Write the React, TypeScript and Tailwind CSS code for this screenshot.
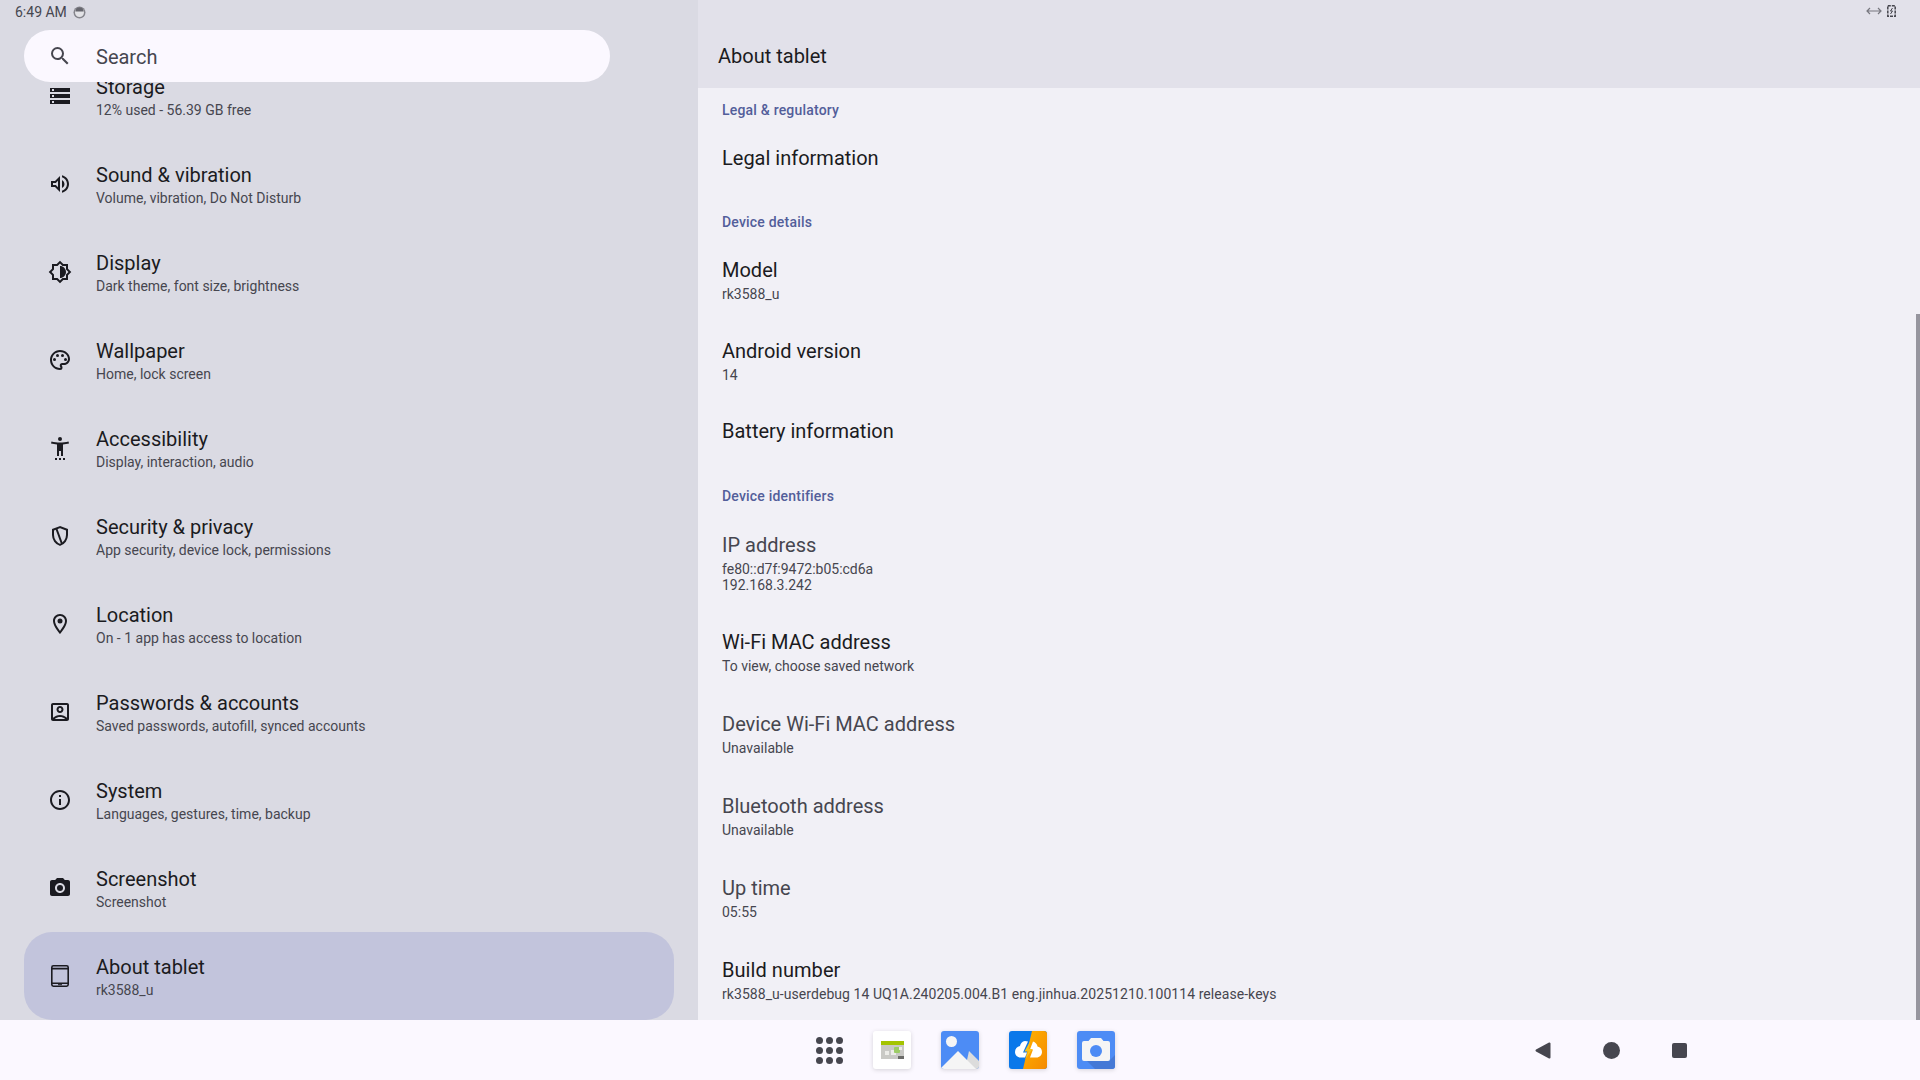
import { MdSearch, MdStorage, MdOutlineVolumeUp, MdOutlineBrightnessMedium, MdOutlinePalette, MdOutlineLocationOn, MdOutlineAccountBox, MdInfoOutline } from "react-icons/md";
import type { ReactNode } from "react";

const FONT = "font-['Roboto',sans-serif]";

function AccessibilityIcon() {
  return (
    <svg viewBox="0 0 24 24" className="h-6 w-6" fill="currentColor">
      <path d="M20.5 5.5c-2.61.7-5.67 1-8.5 1s-5.89-.3-8.5-1L3 7.5c1.86.5 4 .83 6 1V20h2v-5h2v5h2V8.5c2-.17 4.14-.5 6-1l-.5-2z" />
      <circle cx="12" cy="3" r="2" />
      <rect x="7" y="22" width="2" height="2" />
      <rect x="11" y="22" width="2" height="2" />
      <rect x="15" y="22" width="2" height="2" />
    </svg>
  );
}

function ShieldIcon() {
  return (
    <svg viewBox="0 0 24 24" className="h-6 w-6" fill="none" stroke="currentColor" strokeWidth="2">
      <path d="M12 3.1 5 5.7v5.4c0 4.4 2.9 8.5 7 9.8 4.1-1.3 7-5.4 7-9.8V5.7l-7-2.6z" />
      <path d="M8.5 5 14 20" />
    </svg>
  );
}

function CameraIcon() {
  return (
    <svg viewBox="0 0 24 24" className="h-6 w-6" fill="currentColor">
      <path d="M9 2 7.17 4H4c-1.1 0-2 .9-2 2v12c0 1.1.9 2 2 2h16c1.1 0 2-.9 2-2V6c0-1.1-.9-2-2-2h-3.17L15 2H9zm3 15c-2.76 0-5-2.24-5-5s2.24-5 5-5 5 2.24 5 5-2.24 5-5 5z" />
      <circle cx="12" cy="12" r="3" />
    </svg>
  );
}

function TabletIcon() {
  return (
    <svg viewBox="0 0 24 24" className="h-6 w-6" fill="none" stroke="currentColor" strokeWidth="1.6">
      <rect x="3.8" y="1.8" width="16.4" height="20.4" rx="1.6" />
      <path d="M3.8 4.6h16.4M3.8 19.2h16.4" />
      <path d="M10 20.7h4" strokeWidth="1" />
    </svg>
  );
}

const menuItems: { title: string; sub: string; icon: ReactNode; active?: boolean }[] = [
  { title: "Sound & vibration", sub: "Volume, vibration, Do Not Disturb", icon: <MdOutlineVolumeUp size={24} /> },
  { title: "Display", sub: "Dark theme, font size, brightness", icon: <MdOutlineBrightnessMedium size={24} /> },
  { title: "Wallpaper", sub: "Home, lock screen", icon: <MdOutlinePalette size={24} /> },
  { title: "Accessibility", sub: "Display, interaction, audio", icon: <AccessibilityIcon /> },
  { title: "Security & privacy", sub: "App security, device lock, permissions", icon: <ShieldIcon /> },
  { title: "Location", sub: "On - 1 app has access to location", icon: <MdOutlineLocationOn size={24} /> },
  { title: "Passwords & accounts", sub: "Saved passwords, autofill, synced accounts", icon: <MdOutlineAccountBox size={24} /> },
  { title: "System", sub: "Languages, gestures, time, backup", icon: <MdInfoOutline size={24} /> },
  { title: "Screenshot", sub: "Screenshot", icon: <CameraIcon /> },
  { title: "About tablet", sub: "rk3588_u", icon: <TabletIcon />, active: true },
];

function MenuRow({ title, sub, icon, active }: { title: string; sub: string; icon: ReactNode; active?: boolean }) {
  return (
    <div className={`flex h-[88px] items-center gap-6 pl-6 text-[#1b1b21] ${active ? "rounded-[28px] bg-[#c2c4dc]" : ""}`}>
      <div className="flex h-6 w-6 items-center justify-center">{icon}</div>
      <div className="pt-[2px]">
        <div className="text-[20px] leading-[26px]">{title}</div>
        <div className="text-[14px] leading-5 text-[#46464f]">{sub}</div>
      </div>
    </div>
  );
}

function SectionHeader({ label, className }: { label: string; className: string }) {
  return <div className={`pl-6 text-[14px] leading-5 font-medium tracking-[0.2px] text-[#535e9a] ${className}`}>{label}</div>;
}

function InfoRow({ title, sub, dim, className }: { title: string; sub?: string[]; dim?: boolean; className: string }) {
  return (
    <div className={`pl-6 ${className}`}>
      <div className={`text-[20px] leading-[27px] ${dim ? "text-[#46464f]" : "text-[#1b1b21]"}`}>{title}</div>
      {sub && (
        <div className="pt-[2px] text-[14px] leading-4 text-[#46464f]">
          {sub.map((line) => (
            <div key={line}>{line}</div>
          ))}
        </div>
      )}
    </div>
  );
}

function CalendarTile() {
  return (
    <svg viewBox="0 0 38 38" className="h-[38px] w-[38px]">
      <rect width="38" height="38" rx="3" fill="#ffffff" />
      <rect x="8" y="10" width="23" height="18" fill="#c9c9c5" />
      <rect x="8" y="10" width="23" height="4" fill="#a4c400" />
      <rect x="12" y="20" width="4" height="4" fill="#ecece8" />
      <rect x="18" y="19" width="5" height="5" fill="#ecece8" />
      <rect x="21" y="16" width="6" height="6" rx="1" fill="#9ccc65" />
      <rect x="26" y="16" width="3" height="3" fill="#ecece8" />
      <rect x="25" y="25" width="6" height="3" fill="#6b6b68" />
    </svg>
  );
}

function GalleryTile() {
  return (
    <svg viewBox="0 0 38 38" className="h-[38px] w-[38px]">
      <defs>
        <clipPath id="gallery">
          <rect width="38" height="38" rx="3" />
        </clipPath>
      </defs>
      <g clipPath="url(#gallery)">
        <rect width="38" height="38" fill="#4d8cf5" />
        <circle cx="10.5" cy="10.5" r="5.5" fill="#f5f5f5" />
        <path d="M28 20 38 30v8H24z" fill="#dcdcdc" />
        <path d="M17 20 0 37v1h35z" fill="#f5f5f5" />
      </g>
    </svg>
  );
}

function BoltTile() {
  return (
    <svg viewBox="0 0 38 38" className="h-[38px] w-[38px]">
      <defs>
        <clipPath id="tile">
          <rect width="38" height="38" rx="3" />
        </clipPath>
        <linearGradient id="orange" x1="0" y1="0" x2="1" y2="1">
          <stop offset="0" stopColor="#ffb300" />
          <stop offset="1" stopColor="#f58a00" />
        </linearGradient>
      </defs>
      <g clipPath="url(#tile)">
        <rect width="38" height="38" fill="#0a78ea" />
        <path d="M23 0h15v38H14z" fill="url(#orange)" />
        <path d="M16 10c-3 .3-4.500 2.500-5 5C8 15.500 6 18 6 21s2.500 5.500 5.500 5.500H16l2-5h-4l5-11z" fill="#ffffff" />
        <path d="M24 10.500c2.500 1 4 2.500 4.500 5 2.800.5 4.500 2.500 4.500 5.500s-2.500 5.500-5.500 5.500H21l3-8h-3z" fill="#ffffff" />
        <path d="M21.500 9.500 15.500 20.500h4L16 28.500l7.500-10.500h-4z" fill="#f9c21a" />
      </g>
    </svg>
  );
}

function CameraTile() {
  return (
    <svg viewBox="0 0 38 38" className="h-[38px] w-[38px]">
      <rect width="38" height="38" rx="3" fill="#4d8cf5" />
      <path d="M10 30h22l6-6v11a3 3 0 0 1-3 3H18z" fill="#4579d6" />
      <path d="M14 7h10l2.500 3H31a2 2 0 0 1 2 2v16a2 2 0 0 1-2 2H7a2 2 0 0 1-2-2V12a2 2 0 0 1 2-2h4.500z" fill="#f5f5f5" />
      <circle cx="19" cy="20" r="6" fill="#4d8cf5" />
    </svg>
  );
}

export default function App() {
  return (
    <div className={`relative flex h-[1080px] w-[1920px] flex-col overflow-hidden bg-[#fbf8ff] ${FONT}`}>
      <div className="flex h-[1020px]">
        <aside className="relative w-[698px] overflow-hidden bg-[#dadae3]">
          <div className="flex h-6 items-center pl-[15px] text-[14px] text-[#46464f]">
            <span>6:49 AM</span>
            <svg viewBox="0 0 13 13" className="ml-[6px] h-[13px] w-[13px]">
              <circle cx="6.500" cy="6.500" r="6" fill="#85858c" />
              <circle cx="6.500" cy="6.500" r="4.500" fill="#e2e2e6" />
              <path d="M2.500 5.500a4 4 0 0 1 8 0z" fill="#66666e" />
            </svg>
          </div>

          {/* search floats over the scrolled list */}
          <div className="absolute left-6 top-[30px] z-10 flex h-[52px] w-[586px] items-center gap-6 rounded-full bg-[#fbf8ff] pl-6 text-[#46464f]">
            <MdSearch size={24} className="text-[#46464f]" />
            <span className="pt-[2px] text-[20px]">Search</span>
          </div>

          <div className="mt-[28px] px-6">
            <MenuRow title="Storage" sub="12% used - 56.39 GB free" icon={<MdStorage size={24} />} />
            {menuItems.map((item) => (
              <MenuRow key={item.title} {...item} />
            ))}
          </div>
        </aside>

        <main className="relative flex-1 overflow-hidden bg-[#f1f0f6]">
          <header className="relative flex h-[88px] items-end bg-[#e2e1ea] pb-[18px] pl-5 text-[20px] leading-[28px] text-[#1b1b21]">
            About tablet
            <div className="absolute right-6 top-[5px] flex items-center gap-[5px] text-[#77777f]">
              <svg viewBox="0 0 16 10" className="h-[10px] w-4" fill="none" stroke="currentColor" strokeWidth="1.200">
                <path d="M1 5h14M4 2 1 5l3 3M12 2l3 3-3 3" />
              </svg>
              <svg viewBox="0 0 9 12" className="h-3 w-[9px]" fill="none" stroke="#45454d" strokeWidth="1.500">
                <rect x=".8" y=".8" width="7.400" height="10.400" strokeDasharray="3 1" />
                <path d="M5.500 3 3.500 6h2L3.500 9" strokeWidth="1" />
              </svg>
            </div>
          </header>

          <SectionHeader label="Legal & regulatory" className="h-10 pt-3" />
          <InfoRow title="Legal information" className="h-[60px] pt-[17px]" />
          <SectionHeader label="Device details" className="h-[52px] pt-6" />
          <InfoRow title="Model" sub={["rk3588_u"]} className="h-[81px] pt-[17px]" />
          <InfoRow title="Android version" sub={["14"]} className="h-[81px] pt-[17px]" />
          <InfoRow title="Battery information" className="h-[59px] pt-4" />
          <SectionHeader label="Device identifiers" className="h-[54px] pt-[25px]" />
          <InfoRow title="IP address" sub={["fe80::d7f:9472:b05:cd6a", "192.168.3.242"]} dim className="h-[96px] pt-[17px]" />
          <InfoRow title="Wi-Fi MAC address" sub={["To view, choose saved network"]} className="h-[82px] pt-[18px]" />
          <InfoRow title="Device Wi-Fi MAC address" sub={["Unavailable"]} dim className="h-[82px] pt-[18px]" />
          <InfoRow title="Bluetooth address" sub={["Unavailable"]} dim className="h-[82px] pt-[18px]" />
          <InfoRow title="Up time" sub={["05:55"]} dim className="h-[82px] pt-[18px]" />
          <InfoRow title="Build number" sub={["rk3588_u-userdebug 14 UQ1A.240205.004.B1 eng.jinhua.20251210.100114 release-keys"]} className="h-[82px] pt-[18px] tracking-[0.06px]" />

          {/* overlay scrollbar */}
          <div className="absolute bottom-0 right-0 top-[314px] w-1 bg-[#96959e]" />
        </main>
      </div>

      <footer className="flex h-[60px] items-center bg-[#fbf8ff]">
        <div className="ml-[816px] grid w-[27px] grid-cols-3 gap-[3px]">
          {Array.from({ length: 9 }).map((_, i) => (
            <span key={i} className="h-[7px] w-[7px] rounded-full bg-[#46464f]" />
          ))}
        </div>
        <div className="ml-[30px] flex gap-[30px] drop-shadow-sm">
          <CalendarTile />
          <GalleryTile />
          <BoltTile />
          <CameraTile />
        </div>
        <div className="ml-[420px] flex items-center gap-[52px]">
          <svg viewBox="0 0 16 17" className="h-[17px] w-4">
            <path d="M14.500 1.500v14L1.500 8.500z" fill="#46464f" stroke="#46464f" strokeWidth="2" strokeLinejoin="round" />
          </svg>
          <span className="h-[17px] w-[17px] rounded-full bg-[#46464f]" />
          <span className="h-[15px] w-[15px] rounded-[2px] bg-[#46464f]" />
        </div>
      </footer>
    </div>
  );
}
